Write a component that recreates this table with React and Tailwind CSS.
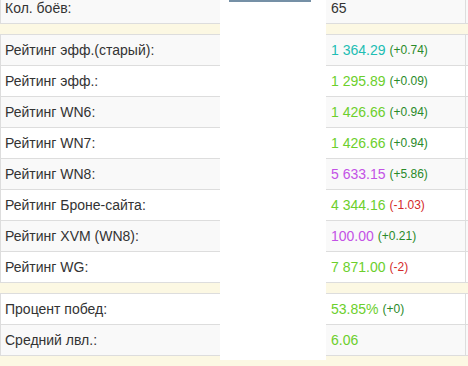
import React from 'react';

// цвета шкалы рейтингов
const C = {
  teal: 'text-[#21bdb3]',
  green: 'text-[#6ccf2c]',
  purple: 'text-[#c352e6]',
  up: 'text-[#2a8a2a]',
  down: 'text-[#d42a2a]',
};

const ROWS = [
  { label: 'Кол. боёв:', value: '65', striped: true },
  { spacer: true },
  { label: 'Рейтинг эфф.(старый):', value: '1 364.29', color: C.teal, delta: '(+0.74)', deltaColor: C.up, striped: true },
  { label: 'Рейтинг эфф.:', value: '1 295.89', color: C.green, delta: '(+0.09)', deltaColor: C.up },
  { label: 'Рейтинг WN6:', value: '1 426.66', color: C.green, delta: '(+0.94)', deltaColor: C.up, striped: true },
  { label: 'Рейтинг WN7:', value: '1 426.66', color: C.green, delta: '(+0.94)', deltaColor: C.up },
  { label: 'Рейтинг WN8:', value: '5 633.15', color: C.purple, delta: '(+5.86)', deltaColor: C.up, striped: true },
  { label: 'Рейтинг Броне-сайта:', value: '4 344.16', color: C.green, delta: '(-1.03)', deltaColor: C.down },
  { label: 'Рейтинг XVM (WN8):', value: '100.00', color: C.purple, delta: '(+0.21)', deltaColor: C.up, striped: true },
  { label: 'Рейтинг WG:', value: '7 871.00', color: C.green, delta: '(-2)', deltaColor: C.down },
  { spacer: true },
  { label: 'Процент побед:', value: '53.85%', color: C.green, delta: '(+0)', deltaColor: C.up },
  { label: 'Средний лвл.:', value: '6.06', color: C.green, striped: true },
  { spacer: true },
];

const StatRow = ({ row }) => {
  if (row.spacer) {
    return <div className="h-[11px] shrink-0 border-b border-[#dddddd] bg-[#fcf8e3]" />;
  }

  return (
    <div
      className={`flex h-[31px] shrink-0 border-b border-[#dddddd] ${
        row.striped ? 'bg-[#f9f9f9]' : 'bg-white'
      }`}
    >
      <div className="flex w-[221px] shrink-0 items-center border-x border-[#dddddd] pl-[4px] text-[#333333]">
        {row.label}
      </div>
      <div className="w-[105px] shrink-0 border-r border-[#dddddd]" />
      <div className="flex w-[140px] shrink-0 items-center border-r border-[#dddddd] pl-[5px]">
        <span className={row.color || 'text-[#333333]'}>{row.value}</span>
        {row.delta && (
          <span className={`ml-[4px] text-[12px] ${row.deltaColor}`}>{row.delta}</span>
        )}
      </div>
      <div className="flex-1" />
    </div>
  );
};

const App = () => {
  return (
    <div className="relative h-[366px] w-[468px] overflow-hidden bg-white font-['Liberation_Sans',Arial,sans-serif] text-[14px]">
      <div className="-mt-[7px] flex flex-col">
        {ROWS.map((row, i) => (
          <StatRow key={i} row={row} />
        ))}
      </div>

      {/* скрытая колонка */}
      <div className="absolute left-[220px] top-0 h-[360px] w-[106px] bg-white" />
      <div className="absolute left-[229px] top-0 h-[2px] w-[82px] bg-[#7590a6]" />
    </div>
  );
};

export default App;
